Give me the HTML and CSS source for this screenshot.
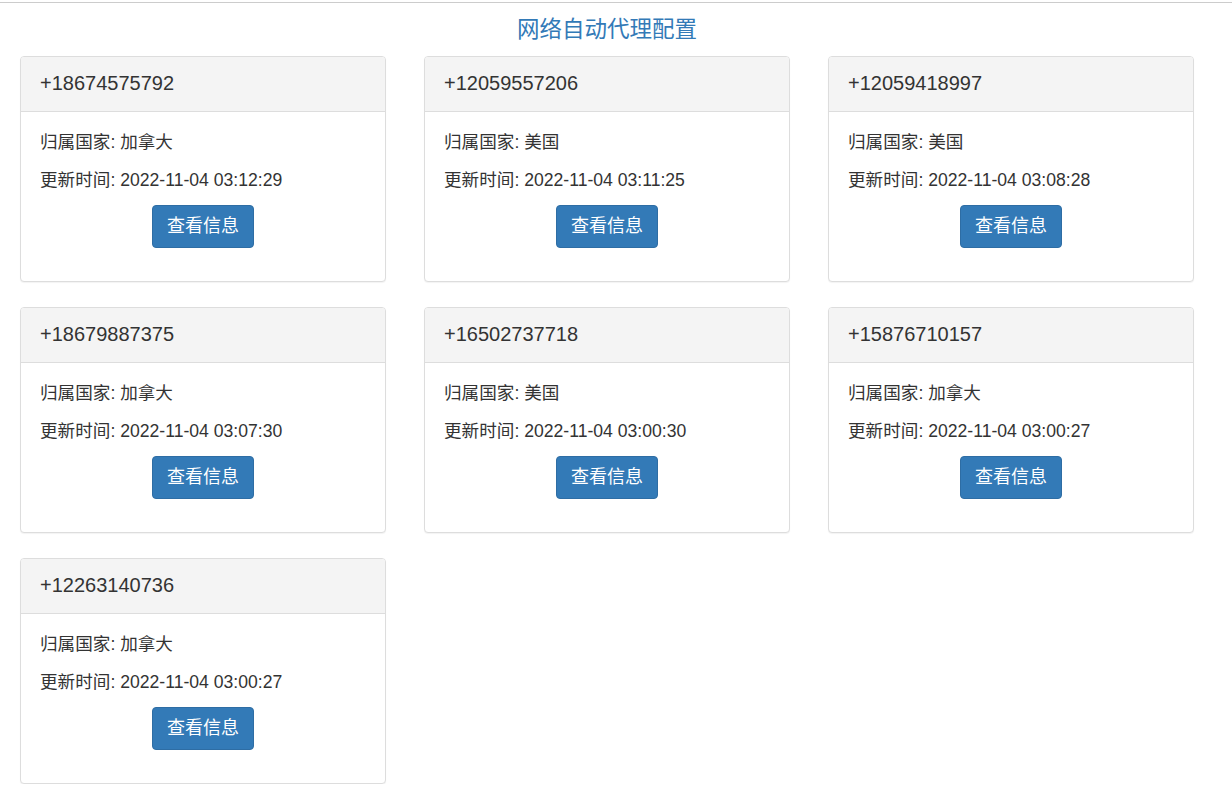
FILE: index.html
```html
<!DOCTYPE html>
<html lang="zh-CN">
<head>
<meta charset="utf-8">
<title>网络自动代理配置</title>
<link rel="stylesheet" href="styles.css">
</head>
<body>
<div class="topline"></div>
<div class="wrap">
  <h3 class="title">网络自动代理配置</h3>
  <div class="grid">
    <div class="card">
      <div class="card-head">+18674575792</div>
      <div class="card-body">
        <p>归属国家: 加拿大</p>
        <p class="last">更新时间: 2022-11-04 03:12:29</p>
        <div class="btn-row"><button class="btn">查看信息</button></div>
      </div>
    </div>
    <div class="card">
      <div class="card-head">+12059557206</div>
      <div class="card-body">
        <p>归属国家: 美国</p>
        <p class="last">更新时间: 2022-11-04 03:11:25</p>
        <div class="btn-row"><button class="btn">查看信息</button></div>
      </div>
    </div>
    <div class="card">
      <div class="card-head">+12059418997</div>
      <div class="card-body">
        <p>归属国家: 美国</p>
        <p class="last">更新时间: 2022-11-04 03:08:28</p>
        <div class="btn-row"><button class="btn">查看信息</button></div>
      </div>
    </div>
    <div class="card">
      <div class="card-head">+18679887375</div>
      <div class="card-body">
        <p>归属国家: 加拿大</p>
        <p class="last">更新时间: 2022-11-04 03:07:30</p>
        <div class="btn-row"><button class="btn">查看信息</button></div>
      </div>
    </div>
    <div class="card">
      <div class="card-head">+16502737718</div>
      <div class="card-body">
        <p>归属国家: 美国</p>
        <p class="last">更新时间: 2022-11-04 03:00:30</p>
        <div class="btn-row"><button class="btn">查看信息</button></div>
      </div>
    </div>
    <div class="card">
      <div class="card-head">+15876710157</div>
      <div class="card-body">
        <p>归属国家: 加拿大</p>
        <p class="last">更新时间: 2022-11-04 03:00:27</p>
        <div class="btn-row"><button class="btn">查看信息</button></div>
      </div>
    </div>
    <div class="card">
      <div class="card-head">+12263140736</div>
      <div class="card-body">
        <p>归属国家: 加拿大</p>
        <p class="last">更新时间: 2022-11-04 03:00:27</p>
        <div class="btn-row"><button class="btn">查看信息</button></div>
      </div>
    </div>
  </div>
</div>
</body>
</html>
```
FILE: styles.css
```css
* { box-sizing: border-box; }
html, body { margin: 0; padding: 0; background: #fff; }
body {
  font-family: "Liberation Sans", Arial, "Noto Sans CJK SC", sans-serif;
  color: #333;
}
.topline {
  margin-top: 2px;
  border-top: 1px solid #cccccc;
}
.wrap {
  width: 1174px;
  margin-left: 20px;
}
.title {
  margin: 12px 0 11px;
  font-size: 22.5px;
  line-height: 30px;
  font-weight: normal;
  text-align: center;
  color: #337ab7;
}
.grid {
  display: grid;
  grid-template-columns: repeat(3, 366px);
  column-gap: 38px;
  row-gap: 25px;
}
.card {
  border: 1px solid #dddddd;
  border-radius: 4px;
  background: #fff;
  box-shadow: 0 1px 1px rgba(0,0,0,0.05);
  height: 226px;
  overflow: hidden;
}
.card-head {
  height: 55px;
  padding: 0 19px;
  background: #f4f4f4;
  border-bottom: 1px solid #dddddd;
  font-size: 20px;
  line-height: 52px;
  color: #333;
}
.card-body {
  padding: 18px 19px 0;
}
.card-body p {
  margin: 0 0 14px;
  font-size: 17.6px;
  line-height: 24px;
  color: #333;
}
.card-body p.last { margin-bottom: 13px; }
.btn-row {
  display: flex;
  justify-content: center;
}
.btn {
  height: 43px;
  padding: 0 14px;
  font-family: "Liberation Sans", Arial, "Noto Sans CJK SC", sans-serif;
  font-size: 18px;
  line-height: 41px;
  color: #fff;
  background: #337ab7;
  border: 1px solid #2e6da4;
  border-radius: 4px;
  cursor: pointer;
}
```
